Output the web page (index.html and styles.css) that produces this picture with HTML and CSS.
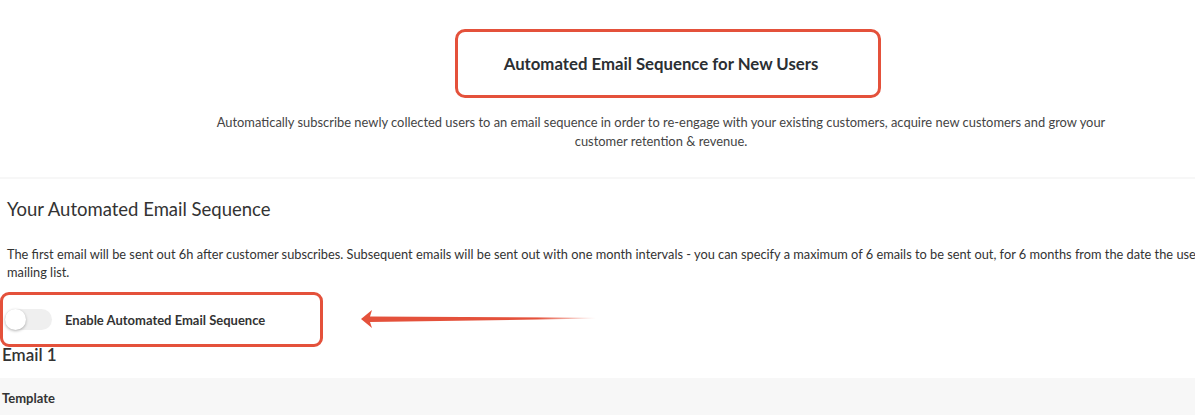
FILE: index.html
```html
<!DOCTYPE html>
<html>
<head>
<meta charset="utf-8">
<link rel="stylesheet" href="styles.css">
</head>
<body>
<div class="page">
  <header class="intro">
    <div class="title-box"><h1 class="title">Automated Email Sequence for New Users</h1></div>
    <p class="lead">Automatically subscribe newly collected users to an email sequence in order to re-engage with your existing customers, acquire new customers and grow your customer retention &amp; revenue.</p>
  </header>
  <section class="sequence">
    <h2 class="seq-title">Your Automated Email Sequence</h2>
    <p class="seq-text">The first email will be sent out 6h after customer subscribes. Subsequent emails will be sent out with one month intervals - you can specify a maximum of 6 emails to be sent out, for 6 months from the date the user joined the mailing list.</p>
    <div class="toggle-row">
      <div class="toggle-box">
        <span class="switch"><span class="knob"></span></span>
        <span class="toggle-label">Enable Automated Email Sequence</span>
      </div>
      <svg class="arrow" width="240" height="24" viewBox="0 0 240 24">
        <defs>
          <linearGradient id="g" x1="0" x2="1" y1="0" y2="0">
            <stop offset="0" stop-color="#e4513b"/>
            <stop offset="0.75" stop-color="#e4513b"/>
            <stop offset="1" stop-color="#e4513b" stop-opacity="0"/>
          </linearGradient>
        </defs>
        <path d="M0 12 L11 3 L9 9.5 L235 10.8 L235 11.6 L9 15 L11 21 Z" fill="url(#g)"/>
      </svg>
    </div>
    <h3 class="email-title">Email 1</h3>
    <div class="template-bar"><span class="template-label">Template</span></div>
  </section>
</div>
</body>
</html>
```
FILE: styles.css
```css
html, body {
  margin: 0;
  padding: 0;
  overflow: hidden;
  background: #fff;
}
body {
  font-family: Lato, "Open Sans", sans-serif;
  color: #333;
  width: 1195px;
  height: 415px;
}
.page {
  width: 1322px;
}
.intro {
  display: flex;
  flex-direction: column;
  align-items: center;
  padding-top: 29px;
  padding-bottom: 26px;
  border-bottom: 2px solid #f7f7f7;
}
.title-box {
  box-sizing: border-box;
  width: 426px;
  height: 69px;
  margin-left: 14px;
  padding-right: 14px;
  border: 3px solid #e4513b;
  border-radius: 10px;
  display: flex;
  align-items: center;
  justify-content: center;
}
.title {
  margin: 0;
  font-size: 16.75px;
  font-weight: 700;
  color: #2b2f33;
}
.lead {
  margin: 15px 0 0;
  width: 940px;
  text-align: center;
  font-size: 12.9px;
  line-height: 19px;
  color: #444;
}
.sequence {
  padding-top: 18px;
}
.seq-title {
  margin: 0 0 0 7px;
  font-size: 18.5px;
  font-weight: 400;
  line-height: 24px;
  color: #333;
}
.seq-text {
  margin: 24px 0 0 7px;
  width: 1290px;
  font-size: 12.8px;
  line-height: 18px;
  color: #333;
}
.toggle-row {
  display: flex;
  align-items: center;
  margin-top: 11px;
}
.toggle-box {
  box-sizing: border-box;
  width: 323px;
  height: 55px;
  border: 3px solid #e4513b;
  border-radius: 9px;
  display: flex;
  align-items: center;
  padding-left: 2px;
}
.switch {
  position: relative;
  width: 47px;
  height: 21px;
  border-radius: 11px;
  background: #efefef;
  flex: none;
}
.knob {
  position: absolute;
  left: 0;
  top: 0;
  width: 21px;
  height: 21px;
  border-radius: 50%;
  background: #fff;
  box-shadow: 0 1px 3px rgba(0,0,0,0.3);
}
.toggle-label {
  margin-left: 13px;
  font-size: 13px;
  font-weight: 700;
  color: #333;
}
.arrow {
  margin-left: 38px;
  margin-top: -2px;
}
.email-title {
  margin: 0 0 0 2px;
  font-size: 17px;
  font-weight: 600;
  line-height: 16px;
  color: #333;
}
.template-bar {
  margin-top: 15px;
  height: 40px;
  background: #f7f7f7;
  display: flex;
  align-items: center;
  padding-left: 2px;
}
.template-label {
  font-size: 13px;
  font-weight: 700;
  color: #333;
}
```
